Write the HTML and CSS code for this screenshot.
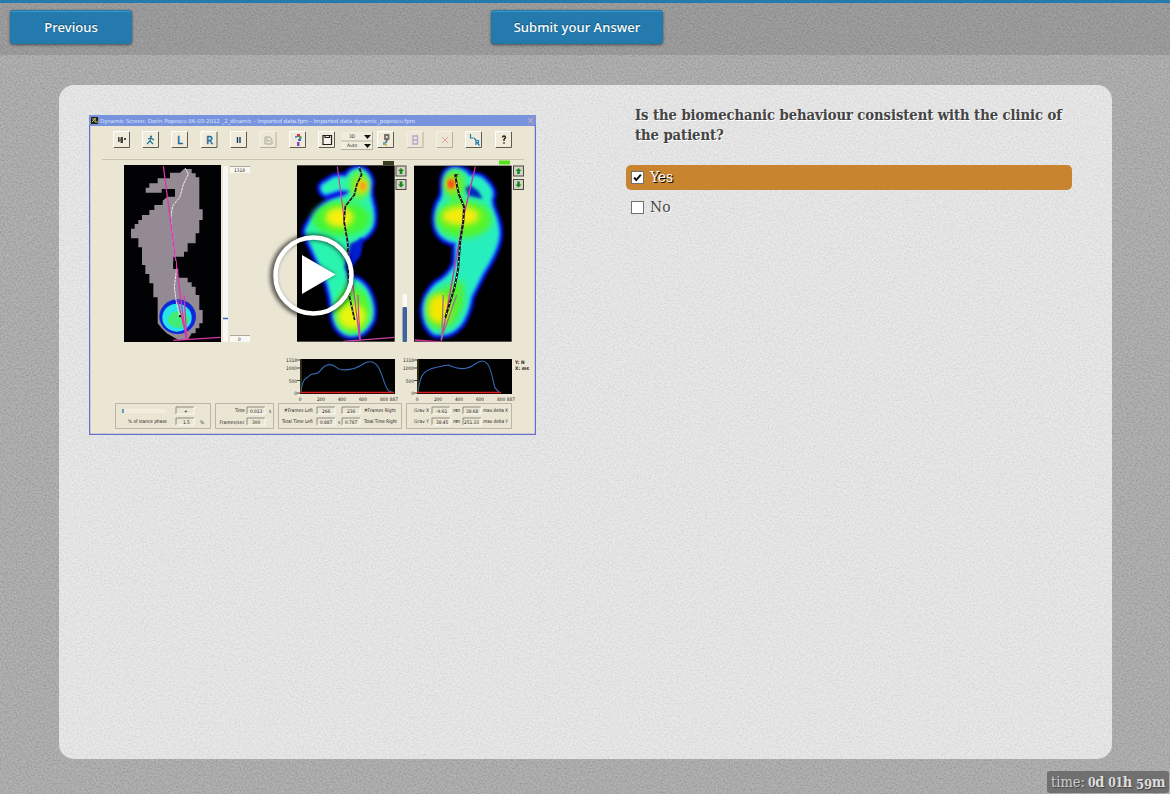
FILE: index.html
```html
<!DOCTYPE html>
<html lang="en">
<head>
<meta charset="utf-8">
<title>Question</title>
<link rel="stylesheet" href="styles.css">
</head>
<body>
<svg class="texture" aria-hidden="true">
  <filter id="grain" x="0" y="0" width="100%" height="100%" color-interpolation-filters="sRGB">
    <feTurbulence type="fractalNoise" baseFrequency="0.55 0.6" numOctaves="2" seed="7"/>
    <feColorMatrix values="0 0 0 0 0  0 0 0 0 0  0 0 0 0 0  -1.1 0 0 0 0.7"/>
  </filter>
  <rect width="100%" height="100%" filter="url(#grain)"/>
</svg>
<header class="toolbar">
  <button class="btn previous">Previous</button>
  <button class="btn submit">Submit your Answer</button>
</header>
<main class="card">
  <svg class="card-grain" aria-hidden="true"><rect width="100%" height="100%" filter="url(#grain)"/></svg>
  <section class="media">
    <svg class="video" viewBox="89 115 447 320" role="img" aria-label="Video">
      <defs>
        <filter id="b1"><feGaussianBlur stdDeviation="4"/></filter>
        <filter id="b2" x="-30%" y="-30%" width="160%" height="160%"><feGaussianBlur stdDeviation="10"/></filter>
        <filter id="b3" x="-20%" y="-20%" width="140%" height="140%"><feGaussianBlur stdDeviation="2"/></filter>
        <clipPath id="cm"><rect x="81" y="31" width="293" height="529"/></clipPath>
        <clipPath id="cr"><rect x="42" y="32" width="293" height="528"/></clipPath>
        <path id="footL" d="M156 105Q150 91 170 83L190 70Q210 64 230 68Q240 46 267 42Q295 50 301 80Q294 110 302 135Q315 180 306 213Q293 244 266 250L252 300L228 330L230 370Q265 368 289 403Q315 450 305 495Q280 543 240 540Q195 532 190 470Q188 430 176 390L137 300L109 238Q103 220 136 183Q165 141 205 130Q238 124 243 104L205 104L168 116Q159 115 156 105Z"/>
        <path id="footR" d="M132 85Q134 46 164 42Q198 45 207 66Q237 59 254 78Q278 101 276 120Q267 138 280 170Q302 220 293 258Q282 300 247 353L212 423Q202 481 179 510Q148 545 104 535Q74 516 72 462Q77 419 109 388Q148 368 168 327L170 262Q126 256 112 223Q102 183 116 147Q134 125 132 85Z"/>
        <g id="btn"><rect width="16" height="16" fill="#f0ebda"/><path d="M0 16H16V0" fill="none" stroke="#605b52" stroke-width="1"/><path d="M0 16V0H16" fill="none" stroke="#fff"/></g>
        <g id="fbox"><path d="M0 7V0H18" fill="none" stroke="#77736b" stroke-width=".8"/><path d="M0 7H18V0" fill="none" stroke="#fff" stroke-width=".7"/></g>
        <g id="arrow"><rect width="10" height="10" fill="#d4d1c7" stroke="#4a4943" stroke-width="1"/><path d="M5 2L8 5H6.3V8H3.7V5H2Z" fill="#128b18"/></g>
      </defs>
      <rect x="89" y="115" width="447" height="320" fill="#ebe6d4"/>
      <rect x="89" y="115" width="447" height="11" fill="#7893dd"/>
      <path d="M89.6 125V434.4H535.4V125" fill="none" stroke="#6470cf" stroke-width="1.3"/>
      <rect x="91" y="117" width="7" height="7" fill="#222411"/><path d="M92 119h3v3h3M92 122l4-4" stroke="#e3e98d" stroke-width=".8" fill="none"/>
      <text class="title" x="100" y="123" textLength="315">Dynamic Screen: Dorin Popescu 06-03-2012 _2_dinamic - Imported data.fpm - Imported data dynamic_popescu.fpm</text>
      <rect x="527" y="117" width="7" height="7" fill="#8b91cb"/><path d="M528.500 118.500l4 4m0-4l-4 4" stroke="#c9cbe8" stroke-width=".8"/>
      <path d="M102 159.500H524" stroke="#c8c3b4"/>
      <g>
        <use href="#btn" x="113.500" y="131.500"/><use href="#btn" x="142.500" y="131.500"/><use href="#btn" x="171.500" y="131.500"/><use href="#btn" x="201" y="131.500"/><use href="#btn" x="230.500" y="131.500"/><use href="#btn" x="260" y="131.500" opacity=".4"/><use href="#btn" x="289.500" y="131.500"/><use href="#btn" x="318.500" y="131.500"/><use href="#btn" x="377.500" y="131.500"/><use href="#btn" x="407" y="131.500" opacity=".4"/><use href="#btn" x="436.500" y="131.500" opacity=".4"/><use href="#btn" x="465.500" y="131.500"/><use href="#btn" x="495.500" y="131.500"/>
        <path d="M118 137h1.500v5H118zm2.500 0h2.500v6h-2.500zm3.500 1h2v2h-2z" fill="#45423a"/><path d="M119 140h4" stroke="#45423a"/>
        <circle cx="151" cy="136.500" r="1.100" fill="#18729b"/><path d="M151 138l-1 3-3 3m3-3l3 3m-5-5l3-1 3 2" fill="none" stroke="#18729b" stroke-width="1.200"/>
        <text class="letter" x="177" y="144">L</text><text class="letter" x="206" y="144">R</text>
        <path d="M237.500 137v6m2.500-6v6" stroke="#153b61" stroke-width="1.400"/>
        <path d="M265 137h5l2 3v4h-7zM266 141h5M267 138v2" fill="none" stroke="#aaa69c"/>
        <path d="M297 134h3v3h-3z" fill="#df3046"/><path d="M299 136h2.500v3H299z" fill="#3fac53"/><path d="M298 139h3v2h-3z" fill="#4b63e9"/><path d="M297 142h2.500v4H297z" fill="#8e45b0"/><path d="M295 136h2v2h-2z" fill="#3aa5dc"/>
        <path d="M323 135.500h8.500v9H323zM325 135.500v2h4.500v-2" fill="#f6f3e9" stroke="#202020" stroke-width="1.200"/>
        <rect x="341" y="132" width="31" height="17" fill="#f1eddd"/><path d="M341 149.500H372.500V132M341 141H372" fill="none" stroke="#a6a294" stroke-width=".8"/>
        <text class="tiny" x="349" y="138">3D</text><text class="tiny" x="347" y="147">Auto</text><path d="M364 135h7l-3.500 4zM364 144h7l-3.500 4z" fill="#111"/>
        <path d="M385 135h3.500v4H385zM387.500 139l-2 4" fill="none" stroke="#6f6e68" stroke-width="1.800"/><path d="M383 142h2.500v3H383z" fill="#4eb0c2"/><path d="M385 144h2v2h-2z" fill="#d5bf30"/>
        <path d="M413 136h4.500v8H413zM413 140h4" fill="none" stroke="#b7a5d0" stroke-width="1.300"/><path d="M442 137l6 6m0-6l-6 6" stroke="#e4a1a0"/>
        <path d="M470.500 134v4h3M474 138l2 2" fill="none" stroke="#207cac" stroke-width="1.200"/><path d="M476 145v-4.500h2.500v2H476m1 0l2.500 3" fill="none" stroke="#207cac" stroke-width="1.200"/><path d="M502.500 137.500q0-1.500 1.500-1.500t1.500 1.500l-1.500 2v1.500m0 1.200v1.500" fill="none" stroke="#25230a" stroke-width="1.400"/>
      </g>
      <rect x="124" y="165" width="97" height="177" fill="#020103"/>
      <g transform="translate(110 160) scale(.333333)">
        <path fill="#938a94" d="M210 38L222 27H245V40H257V52H268V148H278V180H268V220H257V250H233V275H222V290H190V326H205V353H233V367H245V380H257V405H268V450H278V490H268V505H257V520H245L233 540H205L170 520L155 505L143 490V412H130V370H118V342H106V315H96V262H85V235H63V206H74V192H85V180H96V165H118V150H133V135H158V122L172 110H195V87H155V98H107V83H118V70H143V55H180V38Z"/>
        <g filter="url(#b3)"><ellipse cx="203" cy="470" rx="55" ry="52" fill="#102ad9"/><ellipse cx="201" cy="473" rx="44" ry="42" fill="#28e4ec"/><ellipse cx="205" cy="479" rx="32" ry="25" fill="#3feb76"/></g>
        <path d="M225 24L235 42L220 73L210 110L188 138L182 177L190 245L200 325L193 380L198 420L210 474" fill="none" stroke="#eee" stroke-width="3" stroke-dasharray="9 2"/>
        <path d="M160 18L228 535M203 420L230 535M222 405L231 540M190 541L332 532" stroke="#dc35ac" stroke-width="4"/><path d="M207 466h6v6h-6zM190 303h8v23h-8z"/>
      </g>
      <rect x="223" y="166" width="5" height="176" fill="#f8f7f3"/><path d="M223 318.500h5" stroke="#3269be" stroke-width="1.500"/>
      <path d="M230 166h20v7h-20zM230 335h20v7h-20z" fill="#faf8f2"/><path d="M230 166.500h20M230 335.500h20" stroke="#8c887d" stroke-width=".7"/><text class="tiny" x="234" y="172">1318</text><text class="tiny" x="238" y="341">0</text>
      <g transform="translate(270 155) scale(.333333)">
        <rect x="81" y="31" width="293" height="529"/><g clip-path="url(#cm)">
          <g filter="url(#b1)"><use href="#footL" fill="#0829dc" stroke="#0718e8" stroke-width="28"/><use href="#footL" fill="#2af5b0" stroke="#25cff6" stroke-width="3"/></g>
          <path d="M240 266L280 248L272 300L252 325L240 362L224 338Z" fill="#031bd2" filter="url(#b1)"/>
          <g filter="url(#b2)"><ellipse cx="265" cy="92" rx="28" ry="43" fill="#63f535"/><ellipse cx="214" cy="191" rx="88" ry="52" fill="#42f536"/><ellipse cx="248" cy="465" rx="52" ry="70" fill="#57f52c"/></g>
          <g filter="url(#b2)"><ellipse cx="208" cy="187" rx="42" ry="30" fill="#f9f00b"/><ellipse cx="246" cy="484" rx="42" ry="38" fill="#e9f50b"/><ellipse cx="276" cy="93" rx="18" ry="23" fill="#ffd000"/></g><ellipse cx="279" cy="93" rx="9" ry="11" fill="#ff9b1c" filter="url(#b1)"/>
          <path d="M202 35L270 555M249 390L269 555M264 420L266 480L271 555M220 559L374 547" fill="none" stroke="#c943a6" stroke-width="3.500"/>
          <path d="M267 36L275 59L261 87L253 120L226 154L222 200L233 260L237 418L254 495" fill="none" stroke="#111" stroke-width="5"/><path d="M267 36L275 59L261 87L253 120L226 154L222 200L233 260L237 418L254 495" fill="none" stroke="#fff" stroke-width="3" stroke-dasharray="4 12"/>
        </g>
      </g>
      <g transform="translate(400 155) scale(.333333)">
        <rect x="42" y="32" width="293" height="528"/><g clip-path="url(#cr)">
          <g filter="url(#b1)"><use href="#footR" fill="#0829dc" stroke="#0718e8" stroke-width="28"/><use href="#footR" fill="#27efbd" stroke="#25cff6" stroke-width="3"/></g>
          <path d="M192 98L211 91L235 108L248 132L205 122Z" fill="#0429bd" filter="url(#b1)"/>
          <g filter="url(#b2)"><ellipse cx="164" cy="90" rx="32" ry="46" fill="#57f433"/><ellipse cx="192" cy="192" rx="84" ry="56" fill="#55f42b"/><path d="M135 395L190 375L193 450L161 510L107 527L79 494L80 430Z" fill="#52ef30"/></g>
          <g filter="url(#b2)"><ellipse cx="182" cy="183" rx="56" ry="28" fill="#f6ec09"/><ellipse cx="117" cy="462" rx="33" ry="44" fill="#f5e806"/><ellipse cx="155" cy="87" rx="18" ry="22" fill="#ffb400"/></g><ellipse cx="153" cy="87" rx="10" ry="13" fill="#ff4b19" filter="url(#b1)"/>
          <path d="M226 35L193 175L124 558M44 555L124 561" fill="none" stroke="#d331a7" stroke-width="4"/><path d="M130 420L125 550M170 420L123 555" stroke="#98748a" stroke-width="4"/>
          <path d="M176 61H166L171 92L177 119L192 155L190 200L181 257L174 345L163 400L136 488" fill="none" stroke="#111" stroke-width="6"/><path d="M176 61H166L171 92L177 119L192 155L190 200L181 257L174 345L163 400L136 488" fill="none" stroke="#fff" stroke-width="3" stroke-dasharray="4 12"/>
        </g>
      </g>
      <rect x="383" y="161" width="11" height="4" fill="#353e1e"/><rect x="499" y="160.500" width="11" height="4" fill="#52e21b"/>
      <use href="#arrow" x="396" y="166"/><use href="#arrow" transform="translate(396 189.500) scale(1 -1)"/><use href="#arrow" x="513.500" y="166"/><use href="#arrow" transform="translate(513.500 189.500) scale(1 -1)"/>
      <rect x="402.500" y="294" width="4.500" height="47" rx="1" fill="#faf9f5"/><rect x="402.500" y="307" width="4.500" height="35" rx="1" fill="#3e659b"/>
      <rect x="300" y="359" width="95" height="35" fill="#010101"/><rect x="417" y="359" width="95" height="35" fill="#010101"/>
      <path d="M301 392C303 376 306 380 309 376S317 376 320 371C328 360 334 366 339 369C350 372 359 367 365 363C382 355 382 386 389 391L394 393M418 392C421 373 422 377 424 373C430 367 440 367 448 365C460 370 467 370 475 364C490 353 491 374 495 388L499 392" fill="none" stroke="#3869b5" stroke-width="1.100"/>
      <path d="M300 392.500h94M417 392.500h84" stroke="#dd211f" stroke-width="1.300"/><path d="M301 359v34M418 359v34" stroke="#5b5720"/>
      <path d="M297 360h3m-3 8h3m-3 12.500h3m-3 12.500h3M414 360h3m-3 8h3m-3 12.500h3m-3 12.500h3" stroke="#25231e" stroke-width=".8"/>
      <g class="tiny" text-anchor="end"><text x="297" y="362">1318</text><text x="297" y="370">1000</text><text x="297" y="382.500">500</text><text x="297" y="395">0</text><text x="414" y="362">1318</text><text x="414" y="370">1000</text><text x="414" y="382.500">500</text><text x="414" y="395">0</text></g>
      <g class="tiny" text-anchor="middle"><text x="300" y="401">0</text><text x="321" y="401">200</text><text x="342" y="401">400</text><text x="363" y="401">600</text><text x="389" y="401">800 887</text><text x="417" y="401">0</text><text x="438" y="401">200</text><text x="459" y="401">400</text><text x="480" y="401">600</text><text x="506" y="401">800 887</text></g>
      <text class="tiny strong" x="515" y="364">Y: N</text><text class="tiny strong" x="515" y="370" textLength="14">X: ms</text>
      <g fill="none" stroke="#b4afa3" stroke-width=".9"><path d="M115.500 403.500H210.500V428.500H115.500ZM215.500 403.500H273.500V428.500H215.500ZM278.500 403.500H401.500V428.500H278.500ZM406.500 403.500H511.500V428.500H406.500Z"/></g>
      <rect x="123" y="409" width="43" height="4" fill="#f3eddd"/><path d="M123 409v4" stroke="#397cb7" stroke-width="1.500"/>
      <use href="#fbox" x="176" y="407"/><use href="#fbox" x="176" y="418"/><use href="#fbox" x="247" y="407"/><use href="#fbox" x="247" y="418"/><use href="#fbox" x="317" y="407"/><use href="#fbox" x="342" y="407"/><use href="#fbox" x="317" y="418"/><use href="#fbox" x="342" y="418"/><use href="#fbox" x="432" y="407"/><use href="#fbox" x="463" y="407"/><use href="#fbox" x="432" y="418"/><use href="#fbox" x="463" y="418"/>
      <g class="tiny"><text x="184" y="413">+</text><text x="128" y="423" textLength="39">% of stance phase</text><text x="183" y="424">1.5</text><text x="200" y="424">%</text><text x="235" y="412" textLength="10">Time</text><text x="250" y="413">0.013</text><text x="269" y="413">s</text><text x="219.500" y="424" textLength="25">Frames/sec</text><text x="252" y="424">300</text>
      <text x="284" y="412" textLength="29">#Frames Left</text><text x="322" y="413">266</text><text x="347" y="413">236</text><text x="364" y="412" textLength="32">#Frames Right</text><text x="282" y="423" textLength="31">Total Time Left</text><text x="320" y="424">0.887</text><text x="338" y="424">s</text><text x="345" y="424">0.787</text><text x="364" y="423" textLength="33">Total Time Right</text>
      <text x="414" y="412" textLength="15">Grav X</text><text x="436" y="413">-9.61</text><text x="453" y="412" textLength="7">mm</text><text x="466" y="413">38.68</text><text x="483" y="412" textLength="25">max delta X</text><text x="414" y="423" textLength="15">Grav Y</text><text x="436" y="424">38.45</text><text x="453" y="423" textLength="7">mm</text><text x="464" y="424">251.33</text><text x="483" y="423" textLength="25">max delta Y</text></g>
      <g><circle cx="312" cy="276" r="39" fill="none" stroke="#000" stroke-opacity=".65" stroke-width="6" filter="url(#b3)"/><circle cx="313.500" cy="275.500" r="38" fill="none" stroke="#fff" stroke-width="4.500"/><path d="M302 255L335.500 274.500L302 294Z" fill="#000" opacity=".5" filter="url(#b3)"/><path d="M302 255L335.500 274.500L302 294Z" fill="#fff"/></g>
    </svg>
  </section>
  <section class="question">
    <h1>Is the biomechanic behaviour consistent with the clinic of<br>the patient?</h1>
    <label class="answer selected"><span class="check"><svg viewBox="0 0 13 13"><path d="M2.500 6.500L5 9.500L10.500 3" fill="none" stroke="#111" stroke-width="2.400"/></svg></span><span class="caption">Yes</span></label>
    <label class="answer"><span class="check"></span><span class="caption">No</span></label>
  </section>
</main>
<div class="timer"><span class="label">time:</span> <strong><span class="small">0</span>d <span class="small">01</span>h <span class="low">59</span>m</strong></div>
</body>
</html>
```
FILE: styles.css
```css
* { box-sizing: border-box; }
body { margin: 0; height: 794px; overflow: hidden; position: relative; background: #b2b2b2; font-family: "DejaVu Serif Condensed", "DejaVu Serif", serif; color: #444; }
.texture { position: absolute; inset: 0; width: 100%; height: 100%; z-index: -1; opacity: .27; }
.toolbar { height: 55px; border-top: 3px solid #257bae; background: rgba(0,0,0,.1); display: flex; padding: 7px 10px; gap: 359px; }
.btn { height: 34px; border: 1px solid #2377a8; border-radius: 3px; background: #247aad; color: #fff; font: 500 13px "Noto Sans", sans-serif; letter-spacing: .05px; text-shadow: 0 -1px 1px #164c6c; box-shadow: inset 0 1px 0 #399acf, 0 1px 3px rgba(0,0,0,.5); padding: 0; }
.previous { width: 122px; }
.submit { width: 172px; }
.card { position: relative; margin: 30px 58px 0 59px; height: 674px; border-radius: 15px; background: #e8e8e8; display: flex; padding: 20px 40px 0 30px; overflow: hidden; isolation: isolate; }
.card-grain { position: absolute; inset: 0; width: 100%; height: 100%; z-index: -1; opacity: .14; }
.media { width: 447px; margin-right: 90px; padding-top: 10px; }
.video { display: block; width: 447px; height: 320px; }
.question { width: 446px; }
.question h1 { font-size: 14.7px; line-height: 20px; letter-spacing: -.07px; margin: 0 0 20px 9px; white-space: nowrap; text-shadow: 1px 1px 0 #fff; }
.answer { display: flex; align-items: center; height: 25px; margin-bottom: 5px; padding-left: 5px; gap: 6px; border-radius: 5px; font-size: 15.5px; text-shadow: 1px 1px 0 #fff; }
.caption { padding-bottom: 2px; }
.selected { background: #c9842f; color: #fff; text-shadow: 1px 1px 0 #000; }
.check { width: 13px; height: 13px; background: #fff; border: 1px solid #707070; display: flex; }
.check svg { width: 11px; height: 11px; }
.timer { position: absolute; left: 1047px; top: 771px; width: 122px; height: 22px; border-radius: 3px; background: #707070; color: #ccc; font-size: 14.5px; line-height: 22px; padding: 0 4px; display: flex; gap: 3px; white-space: nowrap; text-shadow: 1px 1px 1px #444; }
.timer strong { color: #ddd; letter-spacing: -.3px; }
.small { font-size: 12px; }
.low { font-size: 13px; position: relative; top: 2px; }
.title { font: 5.5px "DejaVu Sans", sans-serif; fill: #d9e3ff; }
.tiny { font: 4.8px "DejaVu Sans Condensed", "DejaVu Sans", sans-serif; fill: #25221c; }
.strong { font-weight: bold; }
.letter { font: 500 11px "Noto Sans", sans-serif; fill: #176c98; stroke: #176c98; stroke-width: .3px; }
```
